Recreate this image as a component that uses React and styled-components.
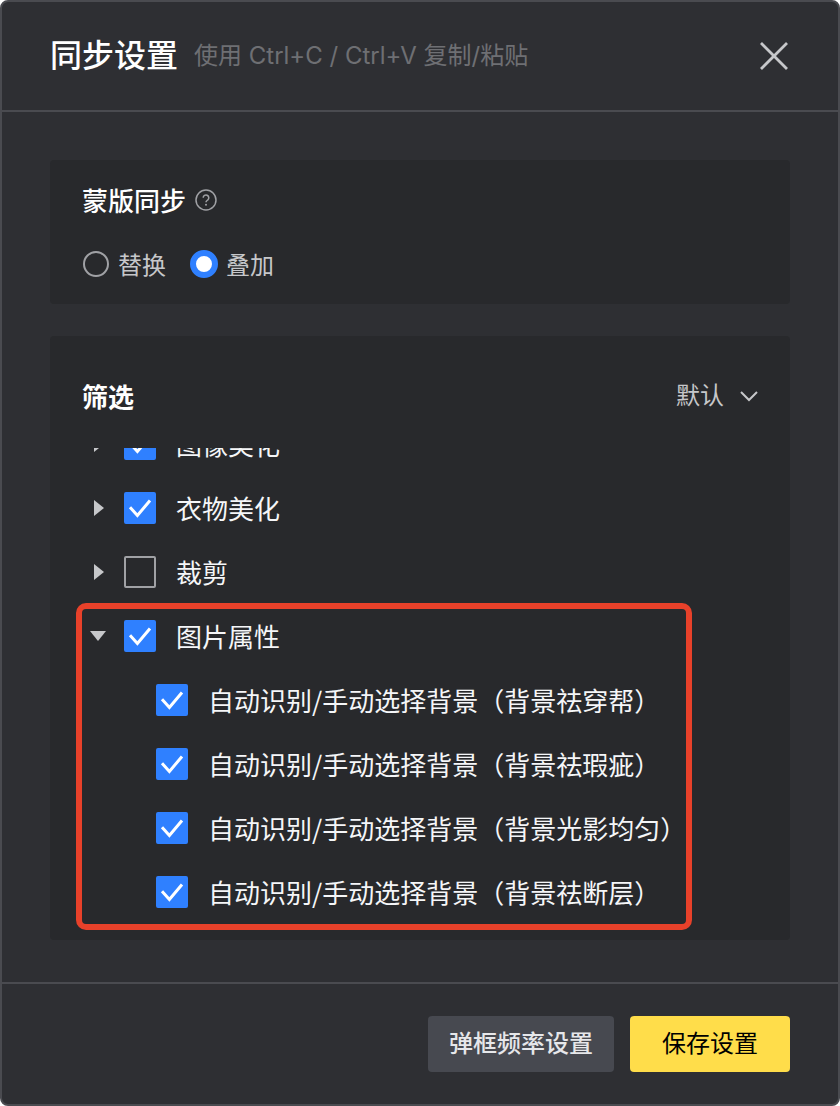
import React, { useLayoutEffect, useRef, useState } from 'react';
import styled, { createGlobalStyle, ThemeProvider } from 'styled-components';

const theme = {
	colors: {
		dialog: '#2e2f33',
		panel: '#28292c',
		line: '#4a4b50',
		text: '#f5f6f8',
		soft: '#c6c7ca',
		muted: '#6e6f73',
		outline: '#a0a1a5',
		blue: '#2f80ff',
		yellow: '#ffdd4a',
		gray: '#474950',
		mark: '#e8412a',
	},
	fonts: {
		base: '"Noto Sans CJK SC", sans-serif',
		latin: 'Inter, "Noto Sans CJK SC", sans-serif',
	},
};

const GlobalStyle = createGlobalStyle`
  * {
    box-sizing: border-box;
  }

  body {
    margin: 0;
    background: #fff;
  }

  body, button, select, input {
    font-family: ${ ( { theme: { fonts } } ) => fonts.base };
  }
`;

const Dialog = styled.section`
  display: flex;
  flex-direction: column;
  min-height: 100vh;
  border: 2px solid ${ ( { theme: { colors } } ) => colors.line };
  border-radius: 8px;
  background: ${ ( { theme: { colors } } ) => colors.dialog };
  color: ${ ( { theme: { colors } } ) => colors.text };
`;

const Header = styled.header`
  display: flex;
  align-items: center;
  gap: 16px;
  height: 110px;
  padding: 0 48px;
  border-bottom: 2px solid ${ ( { theme: { colors } } ) => colors.line };
`;

const Title = styled.h1`
  margin: 0;
  font-family: ${ ( { theme: { fonts } } ) => fonts.latin };
  font-size: 32px;
  font-weight: 500;
  line-height: 40px;
  color: #fff;
`;

const Hint = styled.span`
  flex: 1;
  font-family: ${ ( { theme: { fonts } } ) => fonts.latin };
  font-size: 24px;
  line-height: 40px;
  color: ${ ( { theme: { colors } } ) => colors.muted };
`;

const IconButton = styled.button`
  display: flex;
  flex: none;
  align-items: center;
  justify-content: center;
  width: ${ ( { $size } ) => $size };
  height: ${ ( { $size } ) => $size };
  padding: 0;
  border: 0;
  background: none;
  color: ${ ( { $dim, theme: { colors } } ) => $dim ? colors.outline : colors.soft };
  cursor: pointer;
`;

const Body = styled.div`
  display: flex;
  flex: 1;
  flex-direction: column;
  gap: 32px;
  padding: 48px 48px 42px;
`;

const Panel = styled.section`
  padding: ${ ( { $pad } ) => $pad };
  border-radius: 4px;
  background: ${ ( { theme: { colors } } ) => colors.panel };
`;

const PanelHead = styled.div`
  display: flex;
  align-items: center;
  justify-content: ${ ( { $spread } ) => $spread ? 'space-between' : 'flex-start' };
  gap: 8px;
  padding: 0 32px;
`;

const PanelTitle = styled.h2`
  margin: 0;
  font-size: 26px;
  font-weight: ${ ( { $bold } ) => $bold ? 700 : 500 };
  line-height: 40px;
  color: #fff;
`;

const RadioGroup = styled.div`
  display: flex;
  gap: 24px;
  margin-top: 24px;
  padding: 0 32px;
`;

const RadioLabel = styled.label`
  display: flex;
  align-items: center;
  gap: 8px;
  font-size: 24px;
  line-height: 40px;
  color: ${ ( { theme: { colors } } ) => colors.soft };
  cursor: pointer;
`;

const Radio = styled.input`
  appearance: none;
  width: 26px;
  height: 26px;
  margin: 1px;
  border: 2px solid ${ ( { theme: { colors } } ) => colors.outline };
  border-radius: 50%;

  &:checked {
    width: 28px;
    height: 28px;
    margin: 0;
    border: 6px solid ${ ( { theme: { colors } } ) => colors.blue };
    background: #fff;
  }
`;

const SelectBox = styled.div`
  position: relative;
  display: flex;
  align-items: center;
  color: ${ ( { theme: { colors } } ) => colors.soft };

  svg {
    position: absolute;
    right: 0;
    pointer-events: none;
  }
`;

const Select = styled.select`
  appearance: none;
  height: 40px;
  padding: 0 34px 0 0;
  border: 0;
  background: none;
  font-family: ${ ( { theme: { fonts } } ) => fonts.latin };
  font-size: 24px;
  line-height: 40px;
  color: inherit;
  cursor: pointer;
`;

const List = styled.div`
  height: 492px;
  margin-top: 32px;
  padding: 0 32px 16px;
  overflow-y: auto;
  scrollbar-width: none;
`;

const Group = styled.div`
  position: relative;
  width: fit-content;
`;

// red frame round the highlighted group
const Frame = styled.div`
  position: absolute;
  inset: -1px -6px -6px;
  border: 6px solid ${ ( { theme: { colors } } ) => colors.mark };
  border-radius: 10px;
  pointer-events: none;
`;

const Row = styled.div`
  display: flex;
  align-items: center;
  gap: 10px;
  height: 64px;
  padding-left: ${ ( { $child } ) => $child ? '74px' : '0' };
`;

const CheckLabel = styled.label`
  display: flex;
  align-items: center;
  gap: 20px;
  font-size: 26px;
  line-height: 40px;
  white-space: nowrap;
  cursor: pointer;
`;

const CheckBox = styled.span`
  display: grid;

  > * {
    grid-area: 1 / 1;
  }

  svg {
    pointer-events: none;
  }
`;

const CheckInput = styled.input`
  appearance: none;
  width: 32px;
  height: 32px;
  margin: 0;
  border: 2px solid ${ ( { theme: { colors } } ) => colors.outline };
  border-radius: 2px;

  &:checked {
    border-color: ${ ( { theme: { colors } } ) => colors.blue };
    background: ${ ( { theme: { colors } } ) => colors.blue };
  }
`;

const Footer = styled.footer`
  display: flex;
  justify-content: flex-end;
  gap: 16px;
  padding: 32px 48px;
  border-top: 2px solid ${ ( { theme: { colors } } ) => colors.line };
`;

const Button = styled.button`
  min-width: 160px;
  height: 56px;
  padding: 0 21px;
  border: 0;
  border-radius: 4px;
  background: ${ ( { $primary, theme: { colors } } ) => $primary ? colors.yellow : colors.gray };
  font-family: ${ ( { theme: { fonts } } ) => fonts.latin };
  font-size: 24px;
  font-weight: ${ ( { $primary } ) => $primary ? 400 : 500 };
  line-height: 40px;
  color: ${ ( { $primary } ) => $primary ? '#000' : '#e6e7ea' };
  cursor: pointer;
`;

const CloseIcon = () => (
	<svg width="32" height="32" viewBox="0 0 32 32" fill="none" stroke="currentColor" strokeWidth="2.8">
		<path d="M3 3L29 29M29 3L3 29"/>
	</svg>
);

const HelpIcon = () => (
	<svg width="24" height="24" viewBox="0 0 24 24" fill="none" stroke="currentColor" strokeWidth="1.5">
		<circle cx="12" cy="12" r="10"/>
		<path d="M9.2 9.8a2.8 2.8 0 1 1 4.6 2.1c-1 .8-1.8 1.2-1.8 2.3"/>
		<circle cx="12" cy="16.7" r="1" fill="currentColor" stroke="none"/>
	</svg>
);

const ChevronIcon = () => (
	<svg width="18" height="12" viewBox="0 0 18 12" fill="none" stroke="currentColor" strokeWidth="2">
		<path d="M1 2L9 10L17 2"/>
	</svg>
);

const ArrowIcon = ( { open } ) => (
	<svg width="16" height="16" viewBox="0 0 16 16" fill="currentColor">
		<path d={ open ? 'M0 3H16L8 13Z' : 'M4 0L14 8L4 16Z' }/>
	</svg>
);

const TickIcon = () => (
	<svg width="32" height="32" viewBox="0 0 32 32" fill="none" stroke="#fff" strokeWidth="3">
		<path d="M6 15.2L13.4 23.5L26 8.5"/>
	</svg>
);

const Check = ( { text, checked: initial } ) => {
	const [ checked, setChecked ] = useState( initial );

	return (
		<CheckLabel>
			<CheckBox>
				<CheckInput
					type="checkbox"
					checked={ checked }
					onChange={ () => setChecked( !checked ) }
				/>
				{ checked && <TickIcon/> }
			</CheckBox>
			{ text }
		</CheckLabel>
	);
};

const groups = [
	{ text: '图像美化', checked: true },
	{ text: '衣物美化', checked: true },
	{ text: '裁剪', checked: false },
	{
		text: '图片属性',
		checked: true,
		marked: true,
		items: [
			'自动识别/手动选择背景（背景祛穿帮）',
			'自动识别/手动选择背景（背景祛瑕疵）',
			'自动识别/手动选择背景（背景光影均匀）',
			'自动识别/手动选择背景（背景祛断层）',
		],
	},
];

const FilterGroup = ( { text, checked, marked, items = [] } ) => {
	const [ open, setOpen ] = useState( items.length > 0 );

	return (
		<Group>
			<Row>
				<IconButton
					type="button"
					$size="32px"
					aria-label={ text }
					aria-expanded={ open }
					onClick={ () => setOpen( !open ) }
				>
					<ArrowIcon open={ open }/>
				</IconButton>
				<Check text={ text } checked={ checked }/>
			</Row>
			{ open && items.map( ( item ) => (
				<Row key={ item } $child>
					<Check text={ item } checked/>
				</Row>
			) ) }
			{ marked && <Frame/> }
		</Group>
	);
};

const App = () => {
	const [ mode, setMode ] = useState( 'overlay' );
	const list = useRef( null );

	// open on the last group
	useLayoutEffect( () => {
		list.current.scrollTop = list.current.scrollHeight;
	}, [] );

	return (
		<ThemeProvider theme={ theme }>
			<GlobalStyle/>
			<Dialog>
				<Header>
					<Title>同步设置</Title>
					<Hint>使用 Ctrl+C / Ctrl+V 复制/粘贴</Hint>
					<IconButton type="button" $size="32px" aria-label="关闭">
						<CloseIcon/>
					</IconButton>
				</Header>
				<Body>
					<Panel $pad="20px 0">
						<PanelHead>
							<PanelTitle>蒙版同步</PanelTitle>
							<IconButton type="button" $size="24px" $dim aria-label="帮助">
								<HelpIcon/>
							</IconButton>
						</PanelHead>
						<RadioGroup>
							<RadioLabel>
								<Radio
									type="radio"
									name="mode"
									checked={ mode === 'replace' }
									onChange={ () => setMode( 'replace' ) }
								/>
								替换
							</RadioLabel>
							<RadioLabel>
								<Radio
									type="radio"
									name="mode"
									checked={ mode === 'overlay' }
									onChange={ () => setMode( 'overlay' ) }
								/>
								叠加
							</RadioLabel>
						</RadioGroup>
					</Panel>
					<Panel $pad="40px 0 0">
						<PanelHead $spread>
							<PanelTitle $bold>筛选</PanelTitle>
							<SelectBox>
								<Select aria-label="筛选" defaultValue="default">
									<option value="default">默认</option>
								</Select>
								<ChevronIcon/>
							</SelectBox>
						</PanelHead>
						<List ref={ list }>
							{ groups.map( ( group ) => (
								<FilterGroup key={ group.text } { ...group }/>
							) ) }
						</List>
					</Panel>
				</Body>
				<Footer>
					<Button type="button">弹框频率设置</Button>
					<Button type="button" $primary>保存设置</Button>
				</Footer>
			</Dialog>
		</ThemeProvider>
	);
};

export default App;
